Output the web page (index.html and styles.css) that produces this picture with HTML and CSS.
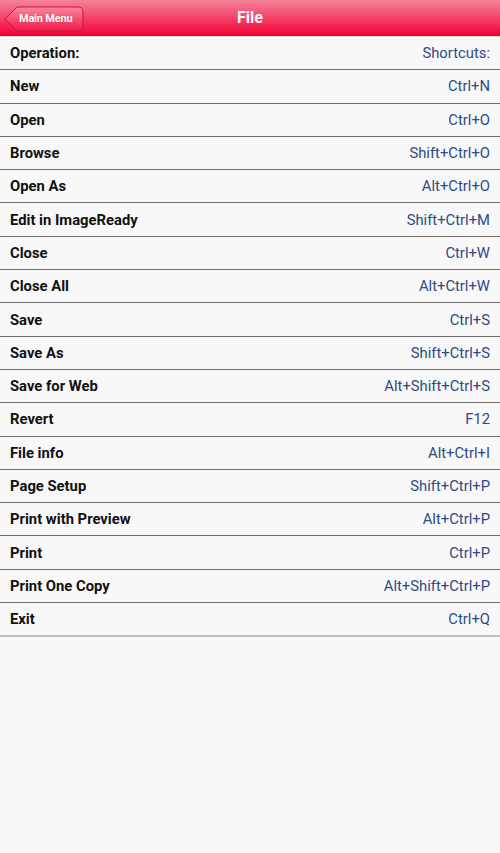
FILE: index.html
```html
<!DOCTYPE html>
<html>
<head>
<meta charset="utf-8">
<link rel="stylesheet" href="styles.css">
</head>
<body>
<header class="topbar">
  <div class="left">
    <a class="back">
      <svg class="back-shape" width="80" height="26" viewBox="0 0 80 26">
        <defs>
          <linearGradient id="bg" x1="0" y1="0" x2="0" y2="1">
            <stop offset="0" stop-color="#f8889e"/>
            <stop offset="1" stop-color="#f2174a"/>
          </linearGradient>
        </defs>
        <path d="M0.8 13 L13 1 H74 Q79 1 79 6 V20 Q79 25 74 25 H13 Z" fill="url(#bg)" stroke="#d3123f" stroke-width="1"/>
      </svg>
      <span class="back-label">Main Menu</span>
    </a>
  </div>
  <h1 class="title">File</h1>
  <div class="right"></div>
</header>
<ul class="list">
  <li class="row"><span class="op">Operation:</span><span class="sc">Shortcuts:</span></li>
  <li class="row"><span class="op">New</span><span class="sc">Ctrl+N</span></li>
  <li class="row"><span class="op">Open</span><span class="sc">Ctrl+O</span></li>
  <li class="row"><span class="op">Browse</span><span class="sc">Shift+Ctrl+O</span></li>
  <li class="row"><span class="op">Open As</span><span class="sc">Alt+Ctrl+O</span></li>
  <li class="row"><span class="op">Edit in ImageReady</span><span class="sc">Shift+Ctrl+M</span></li>
  <li class="row"><span class="op">Close</span><span class="sc">Ctrl+W</span></li>
  <li class="row"><span class="op">Close All</span><span class="sc">Alt+Ctrl+W</span></li>
  <li class="row"><span class="op">Save</span><span class="sc">Ctrl+S</span></li>
  <li class="row"><span class="op">Save As</span><span class="sc">Shift+Ctrl+S</span></li>
  <li class="row"><span class="op">Save for Web</span><span class="sc">Alt+Shift+Ctrl+S</span></li>
  <li class="row"><span class="op">Revert</span><span class="sc">F12</span></li>
  <li class="row"><span class="op">File info</span><span class="sc">Alt+Ctrl+I</span></li>
  <li class="row"><span class="op">Page Setup</span><span class="sc">Shift+Ctrl+P</span></li>
  <li class="row"><span class="op">Print with Preview</span><span class="sc">Alt+Ctrl+P</span></li>
  <li class="row"><span class="op">Print</span><span class="sc">Ctrl+P</span></li>
  <li class="row"><span class="op">Print One Copy</span><span class="sc">Alt+Shift+Ctrl+P</span></li>
  <li class="row last"><span class="op">Exit</span><span class="sc">Ctrl+Q</span></li>
</ul>
</body>
</html>
```
FILE: styles.css
```css
html, body {
  margin: 0;
  padding: 0;
  background: #f8f8f8;
  font-family: Roboto, "Noto Sans", "Liberation Sans", sans-serif;
}
.topbar {
  display: grid;
  grid-template-columns: 1fr auto 1fr;
  align-items: center;
  height: 36px;
  box-sizing: border-box;
  background: linear-gradient(to bottom, #f5839a 0%, #f4456b 50%, #f5073d 100%);
  border-bottom: 2px solid #e4002f;
  box-shadow: 0 1px 0 #d8d8d8;
}
.left {
  display: flex;
  align-items: center;
  padding-left: 4px;
}
.back {
  position: relative;
  display: block;
  width: 80px;
  height: 26px;
  margin-top: 2px;
}
.back-shape {
  position: absolute;
  left: 0;
  top: 0;
}
.back-label {
  position: absolute;
  left: 15px;
  top: 0;
  line-height: 25px;
  font-size: 11px;
  font-weight: bold;
  color: #fff;
  white-space: nowrap;
  letter-spacing: -0.2px;
  text-shadow: 0 0 1px rgba(150,0,30,0.4);
}
.title {
  margin: 0;
  font-size: 16px;
  font-weight: bold;
  color: #fff;
  line-height: 36px;
}
.list {
  list-style: none;
  margin: 0;
  padding: 0;
  margin-top: 1px;
}
.row {
  display: flex;
  justify-content: space-between;
  align-items: center;
  height: 32.3px;
  border-bottom: 1px solid #6c6c6c;
  padding: 0 10px;
  font-size: 14.8px;
}
.row.last {
  border-bottom: 2px solid #bdbdbd;
  height: 32px;
}
.op {
  font-weight: bold;
  color: #111;
}
.sc {
  color: #2d4a85;
}
```
